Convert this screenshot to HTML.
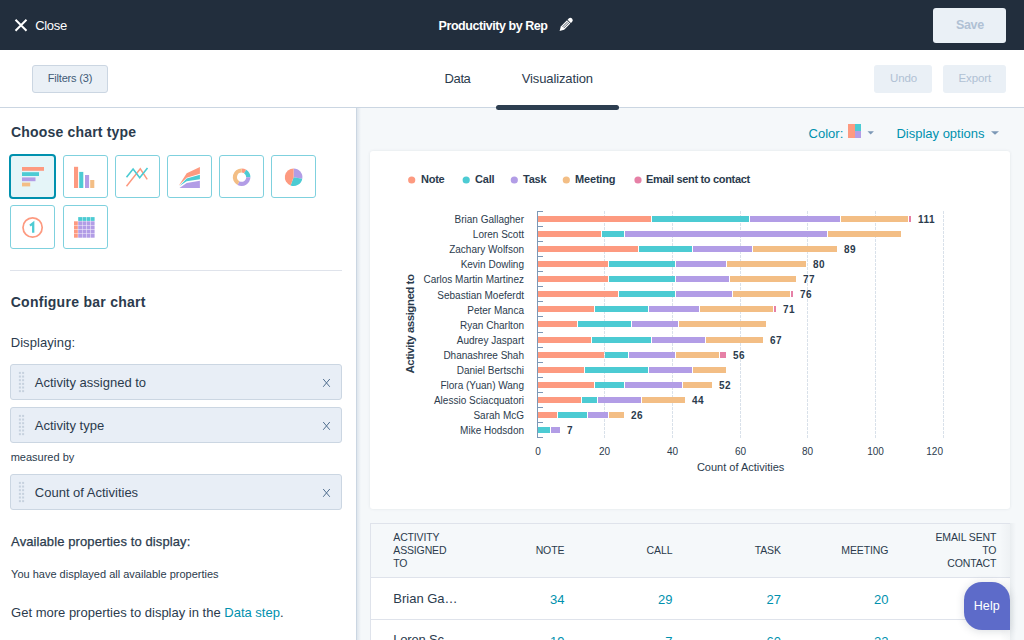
<!DOCTYPE html>
<html><head><meta charset="utf-8"><style>
html,body{margin:0;padding:0;width:1024px;height:640px;overflow:hidden;background:#fff;}
body{position:relative;font-family:"Liberation Sans",sans-serif;}
.t{position:absolute;white-space:nowrap;}
</style></head><body>
<div style="position:absolute;left:0px;top:0px;width:1024px;height:50px;background:#222e3d;"></div>
<svg style="position:absolute;left:0;top:0" width="1024" height="50"><path d="M15.5 19.8 L26.5 30.8 M26.5 19.8 L15.5 30.8" stroke="#fff" stroke-width="2" stroke-linecap="butt"/><g transform="translate(559.6,31) rotate(-45) scale(0.9)"><path d="M0 0 L4.5 -2.6 L14.2 -2.6 L14.2 2.6 L4.5 2.6 Z" fill="#fff"/><path d="M5.5 -0.9 L13.8 -0.9 M5.5 0.9 L13.8 0.9" stroke="#222e3d" stroke-width="0.8"/><path d="M15.1 -2.6 L16.9 -2.6 A2.6 2.6 0 0 1 16.9 2.6 L15.1 2.6 Z" fill="#fff"/></g></svg>
<div class="t" style="left:35.20px;top:19.00px;font-size:13px;line-height:13px;color:#fff;font-weight:normal;letter-spacing:-0.3px;">Close</div>
<div class="t" style="left:438.60px;top:20.00px;font-size:12.5px;line-height:12.5px;color:#fff;font-weight:bold;letter-spacing:-0.45px;">Productivity by Rep</div>
<div style="position:absolute;left:933px;top:8px;width:73px;height:35px;background:#eaf0f6;border-radius:3px;"></div>
<div class="t" style="left:956.00px;top:19.00px;font-size:12.5px;line-height:12.5px;color:#b0c1d4;font-weight:bold;letter-spacing:-0.35px;">Save</div>
<div style="position:absolute;left:0px;top:50px;width:1024px;height:57px;background:#fff;"></div>
<div style="position:absolute;left:32px;top:65px;width:74px;height:26px;background:#eaf0f6;border:1px solid #cbd6e2;border-radius:3px;"></div>
<div class="t" style="left:47.70px;top:73.00px;font-size:11px;line-height:11px;color:#425b76;font-weight:normal;letter-spacing:-0.18px;">Filters (3)</div>
<div class="t" style="left:444.60px;top:72.00px;font-size:13px;line-height:13px;color:#2b3b4d;font-weight:normal;letter-spacing:-0.4px;">Data</div>
<div class="t" style="left:521.80px;top:72.00px;font-size:13px;line-height:13px;color:#2b3b4d;font-weight:normal;letter-spacing:-0.13px;">Visualization</div>
<div style="position:absolute;left:874px;top:65px;width:58px;height:28px;background:#eaf0f6;border-radius:3px;"></div>
<div class="t" style="left:890.10px;top:73.00px;font-size:11.5px;line-height:11.5px;color:#b0c1d4;font-weight:normal;letter-spacing:-0.15px;">Undo</div>
<div style="position:absolute;left:943px;top:65px;width:63px;height:28px;background:#eaf0f6;border-radius:3px;"></div>
<div class="t" style="left:958.50px;top:73.00px;font-size:11.5px;line-height:11.5px;color:#b0c1d4;font-weight:normal;letter-spacing:-0.12px;">Export</div>
<div style="position:absolute;left:0px;top:107px;width:1024px;height:1px;background:#cbd6e2;"></div>
<div style="position:absolute;left:0px;top:108px;width:356px;height:532px;background:#fff;"></div>
<div style="position:absolute;left:357px;top:108px;width:667px;height:532px;background:#f5f8fa;"></div>
<div style="position:absolute;left:356px;top:108px;width:1px;height:532px;background:#cbd6e2;"></div>
<div style="position:absolute;left:357px;top:108px;width:4px;height:532px;background:linear-gradient(90deg,rgba(203,214,226,0.55),rgba(203,214,226,0));"></div>
<div class="t" style="left:11.00px;top:125.00px;font-size:14px;line-height:14px;color:#2b3b4d;font-weight:bold;letter-spacing:0.18px;">Choose chart type</div>
<div style="position:absolute;left:9px;top:154px;width:43px;height:41px;border:2px solid #0091ae;border-radius:4px;background:#e5f5f8;"></div>
<div style="position:absolute;left:63px;top:155px;width:43px;height:41px;border:1px solid #7fd1de;border-radius:3px;background:#fff;"></div>
<div style="position:absolute;left:115px;top:155px;width:43px;height:41px;border:1px solid #7fd1de;border-radius:3px;background:#fff;"></div>
<div style="position:absolute;left:167px;top:155px;width:43px;height:41px;border:1px solid #7fd1de;border-radius:3px;background:#fff;"></div>
<div style="position:absolute;left:219px;top:155px;width:43px;height:41px;border:1px solid #7fd1de;border-radius:3px;background:#fff;"></div>
<div style="position:absolute;left:271px;top:155px;width:43px;height:41px;border:1px solid #7fd1de;border-radius:3px;background:#fff;"></div>
<div style="position:absolute;left:10px;top:205px;width:43px;height:42px;border:1px solid #7fd1de;border-radius:3px;background:#fff;"></div>
<div style="position:absolute;left:63px;top:205px;width:43px;height:42px;border:1px solid #7fd1de;border-radius:3px;background:#fff;"></div>
<svg style="position:absolute;left:0;top:0" width="356" height="260"><rect x="22" y="167" width="22" height="3.8" fill="#fd9a80"/><rect x="22" y="172.2" width="17" height="3.8" fill="#4ccbd3"/><rect x="22" y="177.4" width="13.5" height="3.8" fill="#b29de6"/><rect x="22" y="182.6" width="8.2" height="3.8" fill="#f3be85"/><rect x="74" y="166.8" width="4.1" height="21.2" fill="#fd9a80"/><rect x="79.2" y="171.9" width="4.1" height="16.1" fill="#4ccbd3"/><rect x="85" y="175" width="4.1" height="13" fill="#b29de6"/><rect x="90.2" y="180" width="4.1" height="8" fill="#f3be85"/><polyline points="126.5,186.3 140.3,168.9 147.2,179.3" fill="none" stroke="#fd9a80" stroke-width="1.5"/><polyline points="126.5,177.3 133.1,169 139.7,177.7 147.5,168.1" fill="none" stroke="#4ccbd3" stroke-width="1.6"/><path d="M178.8 185.5 L186.7 173.3 L199.9 167 L199.9 173.8 L186.7 177.7 Z" fill="#fd9a80"/><path d="M179.5 186 L186.7 178.6 L199.9 174.8 L199.9 179.3 L186.7 181.3 Z" fill="#4ccbd3"/><path d="M179.5 187.9 L186.7 182.9 L199.9 180.7 L199.9 187.9 Z" fill="#b29de6"/><path d="M241.60 168.40 A8.8 8.8 0 0 1 246.26 169.74 L244.04 173.30 A4.6 4.6 0 0 0 241.60 172.60 Z" fill="#fd9a80"/><path d="M246.26 169.74 A8.8 8.8 0 0 1 250.40 177.20 L246.20 177.20 A4.6 4.6 0 0 0 244.04 173.30 Z" fill="#4ccbd3"/><path d="M250.40 177.20 A8.8 8.8 0 0 1 237.47 184.97 L239.44 181.26 A4.6 4.6 0 0 0 246.20 177.20 Z" fill="#b29de6"/><path d="M237.47 184.97 A8.8 8.8 0 0 1 241.60 168.40 L241.60 172.60 A4.6 4.6 0 0 0 239.44 181.26 Z" fill="#f3be85"/><path d="M293.6 177.2 L293.60 168.40 A8.8 8.8 0 0 1 302.27 178.73 Z" fill="#b29de6"/><path d="M293.6 177.2 L302.27 178.73 A8.8 8.8 0 0 1 290.59 185.47 Z" fill="#4ccbd3"/><path d="M293.6 177.2 L290.59 185.47 A8.8 8.8 0 0 1 293.60 168.40 Z" fill="#fd9a80"/><circle cx="32.6" cy="227.5" r="9.6" fill="none" stroke="#fd9a80" stroke-width="1.7"/><path d="M30.0 225.6 L33.2 223.1 L33.2 232.8" fill="none" stroke="#4ccbd3" stroke-width="2.3" stroke-linejoin="miter"/><rect x="78.20" y="217.10" width="3.8" height="3.8" fill="#4ccbd3"/><rect x="82.40" y="217.10" width="3.8" height="3.8" fill="#4ccbd3"/><rect x="86.60" y="217.10" width="3.8" height="3.8" fill="#4ccbd3"/><rect x="90.80" y="217.10" width="3.8" height="3.8" fill="#4ccbd3"/><rect x="74.00" y="221.30" width="3.8" height="3.8" fill="#fd9a80"/><rect x="78.20" y="221.30" width="3.8" height="3.8" fill="#b29de6"/><rect x="82.40" y="221.30" width="3.8" height="3.8" fill="#b29de6"/><rect x="86.60" y="221.30" width="3.8" height="3.8" fill="#b29de6"/><rect x="90.80" y="221.30" width="3.8" height="3.8" fill="#b29de6"/><rect x="74.00" y="225.50" width="3.8" height="3.8" fill="#fd9a80"/><rect x="78.20" y="225.50" width="3.8" height="3.8" fill="#b29de6"/><rect x="82.40" y="225.50" width="3.8" height="3.8" fill="#b29de6"/><rect x="86.60" y="225.50" width="3.8" height="3.8" fill="#b29de6"/><rect x="90.80" y="225.50" width="3.8" height="3.8" fill="#b29de6"/><rect x="74.00" y="229.70" width="3.8" height="3.8" fill="#fd9a80"/><rect x="78.20" y="229.70" width="3.8" height="3.8" fill="#b29de6"/><rect x="82.40" y="229.70" width="3.8" height="3.8" fill="#b29de6"/><rect x="86.60" y="229.70" width="3.8" height="3.8" fill="#b29de6"/><rect x="90.80" y="229.70" width="3.8" height="3.8" fill="#b29de6"/><rect x="74.00" y="233.90" width="3.8" height="3.8" fill="#fd9a80"/><rect x="78.20" y="233.90" width="3.8" height="3.8" fill="#b29de6"/><rect x="82.40" y="233.90" width="3.8" height="3.8" fill="#b29de6"/><rect x="86.60" y="233.90" width="3.8" height="3.8" fill="#b29de6"/><rect x="90.80" y="233.90" width="3.8" height="3.8" fill="#b29de6"/></svg>
<div style="position:absolute;left:10px;top:270px;width:332px;height:1px;background:#dfe3eb;"></div>
<div class="t" style="left:10.70px;top:295.00px;font-size:14px;line-height:14px;color:#2b3b4d;font-weight:bold;letter-spacing:0.27px;">Configure bar chart</div>
<div class="t" style="left:10.70px;top:336.00px;font-size:13px;line-height:13px;color:#2b3b4d;font-weight:normal;letter-spacing:0.08px;">Displaying:</div>
<div style="position:absolute;left:10px;top:364px;width:330px;height:34px;background:#e8eef6;border:1px solid #cbd6e2;border-radius:3px;"></div>
<svg style="position:absolute;left:18px;top:371px" width="8" height="22"><rect x="0.9" y="0.90" width="2" height="2" fill="#c6d1de"/><rect x="4.1" y="0.90" width="2" height="2" fill="#c6d1de"/><rect x="0.9" y="4.55" width="2" height="2" fill="#c6d1de"/><rect x="4.1" y="4.55" width="2" height="2" fill="#c6d1de"/><rect x="0.9" y="8.20" width="2" height="2" fill="#c6d1de"/><rect x="4.1" y="8.20" width="2" height="2" fill="#c6d1de"/><rect x="0.9" y="11.85" width="2" height="2" fill="#c6d1de"/><rect x="4.1" y="11.85" width="2" height="2" fill="#c6d1de"/><rect x="0.9" y="15.50" width="2" height="2" fill="#c6d1de"/><rect x="4.1" y="15.50" width="2" height="2" fill="#c6d1de"/><rect x="0.9" y="19.15" width="2" height="2" fill="#c6d1de"/><rect x="4.1" y="19.15" width="2" height="2" fill="#c6d1de"/></svg><svg style="position:absolute;left:322px;top:378px" width="9" height="10"><path d="M1.2 1 L7.8 8.8 M7.8 1 L1.2 8.8" stroke="#516f90" stroke-width="1.0"/></svg>
<div class="t" style="left:34.80px;top:376.00px;font-size:13px;line-height:13px;color:#2b3b4d;font-weight:normal;letter-spacing:0px;">Activity assigned to</div>
<div style="position:absolute;left:10px;top:407px;width:330px;height:34px;background:#e8eef6;border:1px solid #cbd6e2;border-radius:3px;"></div>
<svg style="position:absolute;left:18px;top:414px" width="8" height="22"><rect x="0.9" y="0.90" width="2" height="2" fill="#c6d1de"/><rect x="4.1" y="0.90" width="2" height="2" fill="#c6d1de"/><rect x="0.9" y="4.55" width="2" height="2" fill="#c6d1de"/><rect x="4.1" y="4.55" width="2" height="2" fill="#c6d1de"/><rect x="0.9" y="8.20" width="2" height="2" fill="#c6d1de"/><rect x="4.1" y="8.20" width="2" height="2" fill="#c6d1de"/><rect x="0.9" y="11.85" width="2" height="2" fill="#c6d1de"/><rect x="4.1" y="11.85" width="2" height="2" fill="#c6d1de"/><rect x="0.9" y="15.50" width="2" height="2" fill="#c6d1de"/><rect x="4.1" y="15.50" width="2" height="2" fill="#c6d1de"/><rect x="0.9" y="19.15" width="2" height="2" fill="#c6d1de"/><rect x="4.1" y="19.15" width="2" height="2" fill="#c6d1de"/></svg><svg style="position:absolute;left:322px;top:421px" width="9" height="10"><path d="M1.2 1 L7.8 8.8 M7.8 1 L1.2 8.8" stroke="#516f90" stroke-width="1.0"/></svg>
<div class="t" style="left:34.80px;top:419.00px;font-size:13px;line-height:13px;color:#2b3b4d;font-weight:normal;letter-spacing:0px;">Activity type</div>
<div class="t" style="left:10.70px;top:452.00px;font-size:11px;line-height:11px;color:#2b3b4d;font-weight:normal;letter-spacing:0px;">measured by</div>
<div style="position:absolute;left:10px;top:474px;width:330px;height:34px;background:#e8eef6;border:1px solid #cbd6e2;border-radius:3px;"></div>
<svg style="position:absolute;left:18px;top:481px" width="8" height="22"><rect x="0.9" y="0.90" width="2" height="2" fill="#c6d1de"/><rect x="4.1" y="0.90" width="2" height="2" fill="#c6d1de"/><rect x="0.9" y="4.55" width="2" height="2" fill="#c6d1de"/><rect x="4.1" y="4.55" width="2" height="2" fill="#c6d1de"/><rect x="0.9" y="8.20" width="2" height="2" fill="#c6d1de"/><rect x="4.1" y="8.20" width="2" height="2" fill="#c6d1de"/><rect x="0.9" y="11.85" width="2" height="2" fill="#c6d1de"/><rect x="4.1" y="11.85" width="2" height="2" fill="#c6d1de"/><rect x="0.9" y="15.50" width="2" height="2" fill="#c6d1de"/><rect x="4.1" y="15.50" width="2" height="2" fill="#c6d1de"/><rect x="0.9" y="19.15" width="2" height="2" fill="#c6d1de"/><rect x="4.1" y="19.15" width="2" height="2" fill="#c6d1de"/></svg><svg style="position:absolute;left:322px;top:488px" width="9" height="10"><path d="M1.2 1 L7.8 8.8 M7.8 1 L1.2 8.8" stroke="#516f90" stroke-width="1.0"/></svg>
<div class="t" style="left:34.80px;top:486.00px;font-size:13px;line-height:13px;color:#2b3b4d;font-weight:normal;letter-spacing:0px;">Count of Activities</div>
<div class="t" style="left:11.10px;top:535.00px;font-size:13px;line-height:13px;color:#2b3b4d;font-weight:normal;letter-spacing:0.1px;-webkit-text-stroke:0.25px #2b3b4d;">Available properties to display:</div>
<div class="t" style="left:11.10px;top:569.00px;font-size:11px;line-height:11px;color:#2b3b4d;font-weight:normal;letter-spacing:0px;">You have displayed all available properties</div>
<div class="t" style="left:11.10px;top:606.00px;font-size:13px;line-height:13px;color:#2b3b4d;font-weight:normal;letter-spacing:0px;">Get more properties to display in the <span style="color:#0091ae">Data step</span>.</div>
<div class="t" style="left:808.60px;top:127.00px;font-size:13px;line-height:13px;color:#0091ae;font-weight:normal;letter-spacing:0px;">Color:</div>
<div style="position:absolute;left:848px;top:124px;width:7px;height:14px;background:#fd9a80;"></div>
<div style="position:absolute;left:855px;top:124px;width:6px;height:7px;background:#4ccbd3;"></div>
<div style="position:absolute;left:855px;top:131px;width:6px;height:7px;background:#b29de6;"></div>
<svg style="position:absolute;left:860px;top:125px" width="150" height="15"><path d="M7.5 6.2 L13.9 6.2 L10.7 9.6 Z" fill="#7c98b6"/><path d="M131 6.2 L139 6.2 L135 9.8 Z" fill="#7c98b6"/></svg>
<div class="t" style="left:896.40px;top:127.00px;font-size:13px;line-height:13px;color:#0091ae;font-weight:normal;letter-spacing:0px;">Display options</div>
<div style="position:absolute;left:370px;top:151px;width:640px;height:358px;background:#fff;border-radius:3px;box-shadow:0 0 3px rgba(45,62,80,0.10);"></div>
<svg style="position:absolute;left:0;top:0" width="1024" height="640"><circle cx="411.7" cy="180" r="3.6" fill="#fd9a80"/><circle cx="466.2" cy="180" r="3.6" fill="#4ccbd3"/><circle cx="514.3" cy="180" r="3.6" fill="#b29de6"/><circle cx="566.3" cy="180" r="3.6" fill="#f3be85"/><circle cx="638" cy="180" r="3.6" fill="#e680a6"/></svg>
<div class="t" style="left:420.90px;top:174.00px;font-size:11px;line-height:11px;color:#2b3b4d;font-weight:bold;letter-spacing:-0.2px;">Note</div>
<div class="t" style="left:475.00px;top:174.00px;font-size:11px;line-height:11px;color:#2b3b4d;font-weight:bold;letter-spacing:-0.2px;">Call</div>
<div class="t" style="left:523.00px;top:174.00px;font-size:11px;line-height:11px;color:#2b3b4d;font-weight:bold;letter-spacing:-0.2px;">Task</div>
<div class="t" style="left:575.10px;top:174.00px;font-size:11px;line-height:11px;color:#2b3b4d;font-weight:bold;letter-spacing:-0.2px;">Meeting</div>
<div class="t" style="left:646.10px;top:174.00px;font-size:11px;line-height:11px;color:#2b3b4d;font-weight:bold;letter-spacing:-0.33px;">Email sent to contact</div>
<svg style="position:absolute;left:0;top:0" width="1024" height="640" shape-rendering="crispEdges"><line x1="604.5" y1="211" x2="604.5" y2="438" stroke="#d9e1ea" stroke-width="1" stroke-dasharray="3,1"/><line x1="672.5" y1="211" x2="672.5" y2="438" stroke="#d9e1ea" stroke-width="1" stroke-dasharray="3,1"/><line x1="740.5" y1="211" x2="740.5" y2="438" stroke="#d9e1ea" stroke-width="1" stroke-dasharray="3,1"/><line x1="807.5" y1="211" x2="807.5" y2="438" stroke="#d9e1ea" stroke-width="1" stroke-dasharray="3,1"/><line x1="875.5" y1="211" x2="875.5" y2="438" stroke="#d9e1ea" stroke-width="1" stroke-dasharray="3,1"/><line x1="943.5" y1="211" x2="943.5" y2="438" stroke="#d9e1ea" stroke-width="1" stroke-dasharray="3,1"/><rect x="538" y="216" width="113" height="6" fill="#fd9a80"/><rect x="652" y="216" width="97" height="6" fill="#4ccbd3"/><rect x="750" y="216" width="90" height="6" fill="#b29de6"/><rect x="841" y="216" width="67" height="6" fill="#f3be85"/><rect x="909" y="216" width="2" height="6" fill="#e680a6"/><rect x="538" y="231" width="63" height="6" fill="#fd9a80"/><rect x="602" y="231" width="22" height="6" fill="#4ccbd3"/><rect x="625" y="231" width="202" height="6" fill="#b29de6"/><rect x="828" y="231" width="73" height="6" fill="#f3be85"/><rect x="538" y="246" width="100" height="6" fill="#fd9a80"/><rect x="639" y="246" width="53" height="6" fill="#4ccbd3"/><rect x="693" y="246" width="59" height="6" fill="#b29de6"/><rect x="753" y="246" width="84" height="6" fill="#f3be85"/><rect x="538" y="261" width="70" height="6" fill="#fd9a80"/><rect x="609" y="261" width="66" height="6" fill="#4ccbd3"/><rect x="676" y="261" width="50" height="6" fill="#b29de6"/><rect x="727" y="261" width="79" height="6" fill="#f3be85"/><rect x="538" y="276" width="70" height="6" fill="#fd9a80"/><rect x="609" y="276" width="66" height="6" fill="#4ccbd3"/><rect x="676" y="276" width="53" height="6" fill="#b29de6"/><rect x="730" y="276" width="66" height="6" fill="#f3be85"/><rect x="538" y="291" width="80" height="6" fill="#fd9a80"/><rect x="619" y="291" width="56" height="6" fill="#4ccbd3"/><rect x="676" y="291" width="56" height="6" fill="#b29de6"/><rect x="733" y="291" width="57" height="6" fill="#f3be85"/><rect x="791" y="291" width="2" height="6" fill="#e680a6"/><rect x="538" y="306" width="56" height="6" fill="#fd9a80"/><rect x="595" y="306" width="53" height="6" fill="#4ccbd3"/><rect x="649" y="306" width="50" height="6" fill="#b29de6"/><rect x="700" y="306" width="73" height="6" fill="#f3be85"/><rect x="774" y="306" width="2" height="6" fill="#e680a6"/><rect x="538" y="321" width="39" height="6" fill="#fd9a80"/><rect x="578" y="321" width="53" height="6" fill="#4ccbd3"/><rect x="632" y="321" width="46" height="6" fill="#b29de6"/><rect x="679" y="321" width="87" height="6" fill="#f3be85"/><rect x="538" y="337" width="53" height="6" fill="#fd9a80"/><rect x="592" y="337" width="59" height="6" fill="#4ccbd3"/><rect x="652" y="337" width="53" height="6" fill="#b29de6"/><rect x="706" y="337" width="57" height="6" fill="#f3be85"/><rect x="538" y="352" width="66" height="6" fill="#fd9a80"/><rect x="605" y="352" width="23" height="6" fill="#4ccbd3"/><rect x="629" y="352" width="46" height="6" fill="#b29de6"/><rect x="676" y="352" width="43" height="6" fill="#f3be85"/><rect x="720" y="352" width="6" height="6" fill="#e680a6"/><rect x="538" y="367" width="46" height="6" fill="#fd9a80"/><rect x="585" y="367" width="63" height="6" fill="#4ccbd3"/><rect x="649" y="367" width="43" height="6" fill="#b29de6"/><rect x="693" y="367" width="33" height="6" fill="#f3be85"/><rect x="538" y="382" width="56" height="6" fill="#fd9a80"/><rect x="595" y="382" width="29" height="6" fill="#4ccbd3"/><rect x="625" y="382" width="57" height="6" fill="#b29de6"/><rect x="683" y="382" width="29" height="6" fill="#f3be85"/><rect x="538" y="397" width="43" height="6" fill="#fd9a80"/><rect x="582" y="397" width="15" height="6" fill="#4ccbd3"/><rect x="598" y="397" width="43" height="6" fill="#b29de6"/><rect x="642" y="397" width="43" height="6" fill="#f3be85"/><rect x="538" y="412" width="19" height="6" fill="#fd9a80"/><rect x="558" y="412" width="29" height="6" fill="#4ccbd3"/><rect x="588" y="412" width="20" height="6" fill="#b29de6"/><rect x="609" y="412" width="15" height="6" fill="#f3be85"/><rect x="538" y="427" width="12" height="6" fill="#4ccbd3"/><rect x="551" y="427" width="9" height="6" fill="#b29de6"/><line x1="537.5" y1="211" x2="537.5" y2="438" stroke="#7c98b6" stroke-width="1"/><line x1="537" y1="211.5" x2="542.5" y2="211.5" stroke="#7c98b6" stroke-width="1"/><line x1="537" y1="226.5" x2="542.5" y2="226.5" stroke="#7c98b6" stroke-width="1"/><line x1="537" y1="241.5" x2="542.5" y2="241.5" stroke="#7c98b6" stroke-width="1"/><line x1="537" y1="256.5" x2="542.5" y2="256.5" stroke="#7c98b6" stroke-width="1"/><line x1="537" y1="271.5" x2="542.5" y2="271.5" stroke="#7c98b6" stroke-width="1"/><line x1="537" y1="286.5" x2="542.5" y2="286.5" stroke="#7c98b6" stroke-width="1"/><line x1="537" y1="301.5" x2="542.5" y2="301.5" stroke="#7c98b6" stroke-width="1"/><line x1="537" y1="316.5" x2="542.5" y2="316.5" stroke="#7c98b6" stroke-width="1"/><line x1="537" y1="332.5" x2="542.5" y2="332.5" stroke="#7c98b6" stroke-width="1"/><line x1="537" y1="347.5" x2="542.5" y2="347.5" stroke="#7c98b6" stroke-width="1"/><line x1="537" y1="362.5" x2="542.5" y2="362.5" stroke="#7c98b6" stroke-width="1"/><line x1="537" y1="377.5" x2="542.5" y2="377.5" stroke="#7c98b6" stroke-width="1"/><line x1="537" y1="392.5" x2="542.5" y2="392.5" stroke="#7c98b6" stroke-width="1"/><line x1="537" y1="407.5" x2="542.5" y2="407.5" stroke="#7c98b6" stroke-width="1"/><line x1="537" y1="422.5" x2="542.5" y2="422.5" stroke="#7c98b6" stroke-width="1"/><line x1="537" y1="437.5" x2="542.5" y2="437.5" stroke="#7c98b6" stroke-width="1"/></svg>
<div class="t" style="right:500.00px;top:215.00px;font-size:10px;line-height:10px;color:#2b3b4d;font-weight:normal;letter-spacing:0px;">Brian Gallagher</div>
<div class="t" style="left:918.00px;top:215.00px;font-size:10px;line-height:10px;color:#2b3b4d;font-weight:bold;letter-spacing:0.45px;">111</div>
<div class="t" style="right:500.00px;top:230.00px;font-size:10px;line-height:10px;color:#2b3b4d;font-weight:normal;letter-spacing:0px;">Loren Scott</div>
<div class="t" style="right:500.00px;top:245.00px;font-size:10px;line-height:10px;color:#2b3b4d;font-weight:normal;letter-spacing:0px;">Zachary Wolfson</div>
<div class="t" style="left:844.00px;top:245.00px;font-size:10px;line-height:10px;color:#2b3b4d;font-weight:bold;letter-spacing:0.45px;">89</div>
<div class="t" style="right:500.00px;top:260.00px;font-size:10px;line-height:10px;color:#2b3b4d;font-weight:normal;letter-spacing:0px;">Kevin Dowling</div>
<div class="t" style="left:813.00px;top:260.00px;font-size:10px;line-height:10px;color:#2b3b4d;font-weight:bold;letter-spacing:0.45px;">80</div>
<div class="t" style="right:500.00px;top:275.00px;font-size:10px;line-height:10px;color:#2b3b4d;font-weight:normal;letter-spacing:0px;">Carlos Martin Martinez</div>
<div class="t" style="left:803.00px;top:275.00px;font-size:10px;line-height:10px;color:#2b3b4d;font-weight:bold;letter-spacing:0.45px;">77</div>
<div class="t" style="right:500.00px;top:291.00px;font-size:10px;line-height:10px;color:#2b3b4d;font-weight:normal;letter-spacing:0px;">Sebastian Moeferdt</div>
<div class="t" style="left:800.00px;top:290.00px;font-size:10px;line-height:10px;color:#2b3b4d;font-weight:bold;letter-spacing:0.45px;">76</div>
<div class="t" style="right:500.00px;top:306.00px;font-size:10px;line-height:10px;color:#2b3b4d;font-weight:normal;letter-spacing:0px;">Peter Manca</div>
<div class="t" style="left:783.00px;top:305.00px;font-size:10px;line-height:10px;color:#2b3b4d;font-weight:bold;letter-spacing:0.45px;">71</div>
<div class="t" style="right:500.00px;top:321.00px;font-size:10px;line-height:10px;color:#2b3b4d;font-weight:normal;letter-spacing:0px;">Ryan Charlton</div>
<div class="t" style="right:500.00px;top:336.00px;font-size:10px;line-height:10px;color:#2b3b4d;font-weight:normal;letter-spacing:0px;">Audrey Jaspart</div>
<div class="t" style="left:770.00px;top:336.00px;font-size:10px;line-height:10px;color:#2b3b4d;font-weight:bold;letter-spacing:0.45px;">67</div>
<div class="t" style="right:500.00px;top:351.00px;font-size:10px;line-height:10px;color:#2b3b4d;font-weight:normal;letter-spacing:0px;">Dhanashree Shah</div>
<div class="t" style="left:733.00px;top:351.00px;font-size:10px;line-height:10px;color:#2b3b4d;font-weight:bold;letter-spacing:0.45px;">56</div>
<div class="t" style="right:500.00px;top:366.00px;font-size:10px;line-height:10px;color:#2b3b4d;font-weight:normal;letter-spacing:0px;">Daniel Bertschi</div>
<div class="t" style="right:500.00px;top:381.00px;font-size:10px;line-height:10px;color:#2b3b4d;font-weight:normal;letter-spacing:0px;">Flora (Yuan) Wang</div>
<div class="t" style="left:719.00px;top:381.00px;font-size:10px;line-height:10px;color:#2b3b4d;font-weight:bold;letter-spacing:0.45px;">52</div>
<div class="t" style="right:500.00px;top:396.00px;font-size:10px;line-height:10px;color:#2b3b4d;font-weight:normal;letter-spacing:0px;">Alessio Sciacquatori</div>
<div class="t" style="left:692.00px;top:396.00px;font-size:10px;line-height:10px;color:#2b3b4d;font-weight:bold;letter-spacing:0.45px;">44</div>
<div class="t" style="right:500.00px;top:411.00px;font-size:10px;line-height:10px;color:#2b3b4d;font-weight:normal;letter-spacing:0px;">Sarah McG</div>
<div class="t" style="left:631.00px;top:411.00px;font-size:10px;line-height:10px;color:#2b3b4d;font-weight:bold;letter-spacing:0.45px;">26</div>
<div class="t" style="right:500.00px;top:426.00px;font-size:10px;line-height:10px;color:#2b3b4d;font-weight:normal;letter-spacing:0px;">Mike Hodsdon</div>
<div class="t" style="left:567.00px;top:426.00px;font-size:10px;line-height:10px;color:#2b3b4d;font-weight:bold;letter-spacing:0.45px;">7</div>
<div class="t" style="left:338.00px;width:400px;text-align:center;top:447.00px;font-size:10px;line-height:10px;color:#2b3b4d;font-weight:normal;letter-spacing:0px;">0</div>
<div class="t" style="left:404.50px;width:400px;text-align:center;top:447.00px;font-size:10px;line-height:10px;color:#2b3b4d;font-weight:normal;letter-spacing:0px;">20</div>
<div class="t" style="left:472.50px;width:400px;text-align:center;top:447.00px;font-size:10px;line-height:10px;color:#2b3b4d;font-weight:normal;letter-spacing:0px;">40</div>
<div class="t" style="left:540.50px;width:400px;text-align:center;top:447.00px;font-size:10px;line-height:10px;color:#2b3b4d;font-weight:normal;letter-spacing:0px;">60</div>
<div class="t" style="left:607.50px;width:400px;text-align:center;top:447.00px;font-size:10px;line-height:10px;color:#2b3b4d;font-weight:normal;letter-spacing:0px;">80</div>
<div class="t" style="left:675.50px;width:400px;text-align:center;top:447.00px;font-size:10px;line-height:10px;color:#2b3b4d;font-weight:normal;letter-spacing:0px;">100</div>
<div class="t" style="right:81.00px;top:447.00px;font-size:10px;line-height:10px;color:#2b3b4d;font-weight:normal;letter-spacing:0px;">120</div>
<div class="t" style="left:540.60px;width:400px;text-align:center;top:462.00px;font-size:11px;line-height:11px;color:#2b3b4d;font-weight:normal;letter-spacing:0px;">Count of Activities</div>
<div class="t" style="left:350px;top:317px;width:120px;height:14px;line-height:14px;text-align:center;font-size:11.5px;font-weight:bold;color:#2b3b4d;letter-spacing:-0.48px;transform:rotate(-90deg);">Activity assigned to</div>
<div style="position:absolute;left:370px;top:523px;width:640px;height:117px;background:#fff;border:1px solid #dfe3eb;border-right:none;border-bottom:none;box-sizing:border-box;"></div>
<div style="position:absolute;left:1010px;top:523px;width:6px;height:117px;background:linear-gradient(90deg,rgba(45,62,80,0.06),rgba(45,62,80,0));"></div>
<div style="position:absolute;left:371px;top:524px;width:639px;height:53px;background:#f5f8fa;"></div>
<div style="position:absolute;left:371px;top:577px;width:639px;height:1px;background:#dfe3eb;"></div>
<div style="position:absolute;left:371px;top:619px;width:639px;height:1px;background:#dfe3eb;"></div>
<div style="position:absolute;left:1000px;top:524px;width:10px;height:116px;background:linear-gradient(90deg,rgba(45,62,80,0),rgba(45,62,80,0.035));"></div>
<div class="t" style="left:393.30px;top:532.00px;font-size:10.5px;line-height:10.5px;color:#2b3b4d;font-weight:normal;letter-spacing:-0.15px;">ACTIVITY</div>
<div class="t" style="left:393.30px;top:545.00px;font-size:10.5px;line-height:10.5px;color:#2b3b4d;font-weight:normal;letter-spacing:-0.15px;">ASSIGNED</div>
<div class="t" style="left:393.30px;top:558.00px;font-size:10.5px;line-height:10.5px;color:#2b3b4d;font-weight:normal;letter-spacing:-0.15px;">TO</div>
<div class="t" style="right:459.60px;top:545.00px;font-size:10.5px;line-height:10.5px;color:#2b3b4d;font-weight:normal;letter-spacing:-0.1px;">NOTE</div>
<div class="t" style="right:351.60px;top:545.00px;font-size:10.5px;line-height:10.5px;color:#2b3b4d;font-weight:normal;letter-spacing:-0.1px;">CALL</div>
<div class="t" style="right:243.10px;top:545.00px;font-size:10.5px;line-height:10.5px;color:#2b3b4d;font-weight:normal;letter-spacing:-0.1px;">TASK</div>
<div class="t" style="right:135.60px;top:545.00px;font-size:10.5px;line-height:10.5px;color:#2b3b4d;font-weight:normal;letter-spacing:-0.1px;">MEETING</div>
<div class="t" style="right:27.70px;top:532.00px;font-size:10.5px;line-height:10.5px;color:#2b3b4d;font-weight:normal;letter-spacing:-0.12px;">EMAIL SENT</div>
<div class="t" style="right:27.70px;top:545.00px;font-size:10.5px;line-height:10.5px;color:#2b3b4d;font-weight:normal;letter-spacing:-0.12px;">TO</div>
<div class="t" style="right:27.70px;top:558.00px;font-size:10.5px;line-height:10.5px;color:#2b3b4d;font-weight:normal;letter-spacing:-0.12px;">CONTACT</div>
<div class="t" style="left:393.30px;top:592.00px;font-size:13px;line-height:13px;color:#2b3b4d;font-weight:normal;letter-spacing:0px;">Brian Ga…</div>
<div class="t" style="right:459.60px;top:593.00px;font-size:13px;line-height:13px;color:#0091ae;font-weight:normal;letter-spacing:0px;">34</div>
<div class="t" style="right:351.60px;top:593.00px;font-size:13px;line-height:13px;color:#0091ae;font-weight:normal;letter-spacing:0px;">29</div>
<div class="t" style="right:243.10px;top:593.00px;font-size:13px;line-height:13px;color:#0091ae;font-weight:normal;letter-spacing:0px;">27</div>
<div class="t" style="right:135.60px;top:593.00px;font-size:13px;line-height:13px;color:#0091ae;font-weight:normal;letter-spacing:0px;">20</div>
<div class="t" style="left:393.30px;top:633.00px;font-size:13px;line-height:13px;color:#2b3b4d;font-weight:normal;letter-spacing:-0.2px;">Loren Sc…</div>
<div class="t" style="right:459.60px;top:635.00px;font-size:13px;line-height:13px;color:#0091ae;font-weight:normal;letter-spacing:0px;">19</div>
<div class="t" style="right:351.60px;top:635.00px;font-size:13px;line-height:13px;color:#0091ae;font-weight:normal;letter-spacing:0px;">7</div>
<div class="t" style="right:243.10px;top:635.00px;font-size:13px;line-height:13px;color:#0091ae;font-weight:normal;letter-spacing:0px;">60</div>
<div class="t" style="right:135.60px;top:635.00px;font-size:13px;line-height:13px;color:#0091ae;font-weight:normal;letter-spacing:0px;">22</div>
<div style="position:absolute;left:496px;top:105px;width:123px;height:5px;background:#2d3e50;border-radius:3px;"></div>
<div style="position:absolute;left:964px;top:582px;width:46px;height:48px;background:#5d6bc9;border-radius:18px 18px 0 18px;box-shadow:0 1px 8px rgba(45,62,80,0.18);"></div>
<div class="t" style="left:973.80px;top:600.00px;font-size:12.5px;line-height:12.5px;color:#fff;font-weight:normal;letter-spacing:0.05px;">Help</div>
</body></html>
